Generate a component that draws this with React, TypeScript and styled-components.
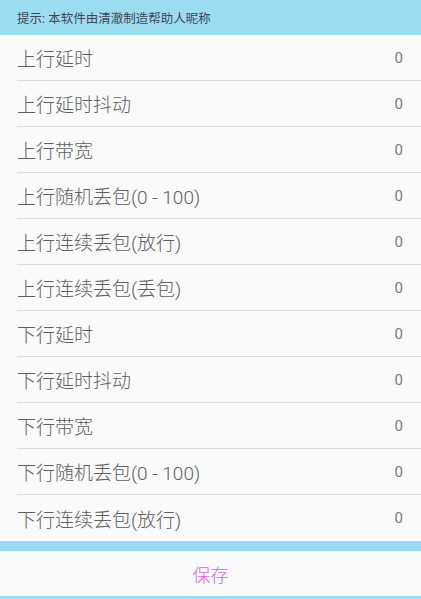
import React from "react";
import styled, { createGlobalStyle } from "styled-components";

const Global = createGlobalStyle`
  html, body { margin: 0; padding: 0; background: #fafafa; }
  body { font-family: Roboto, "Noto Sans CJK SC", sans-serif; }
`;

const Page = styled.div`
  display: flex;
  flex-direction: column;
  width: 421px;
  height: 599px;
  background: #fafafa;
  overflow: hidden;
`;

const Hint = styled.div`
  height: 35px;
  background: #9bdcf2;
  color: #3d4a50;
  font-size: 12.5px;
  display: flex;
  align-items: center;
  padding-left: 17px;
  padding-bottom: 1px;
  box-sizing: border-box;
`;

const List = styled.div`
  display: flex;
  flex-direction: column;
`;

const Row = styled.div<{ $last?: boolean }>`
  height: 46px;
  box-sizing: border-box;
  margin-left: 17px;
  padding-right: 18px;
  display: flex;
  align-items: center;
  justify-content: space-between;
  border-bottom: ${(p) => (p.$last ? "none" : "1px solid #dddddd")};
`;

const Label = styled.span`
  font-size: 19px;
  font-weight: 300;
  color: #5f5f5f;
`;

const Value = styled.span`
  font-size: 15px;
  font-weight: 400;
  color: #7a7a7a;
`;

const Band = styled.div`
  height: 10px;
  background: #9bdcf2;
`;

const SaveButton = styled.div`
  height: 45px;
  display: flex;
  align-items: center;
  justify-content: center;
  font-size: 18px;
  font-weight: 300;
  color: #e060e0;
  background: #fafafa;
  border-top: 1px solid #e3f4fa;
  box-sizing: border-box;
`;

const BottomBar = styled.div`
  height: 3px;
  background: #9bdcf2;
`;

const items = [
  "上行延时",
  "上行延时抖动",
  "上行带宽",
  "上行随机丢包(0 - 100)",
  "上行连续丢包(放行)",
  "上行连续丢包(丢包)",
  "下行延时",
  "下行延时抖动",
  "下行带宽",
  "下行随机丢包(0 - 100)",
  "下行连续丢包(放行)",
];

export default function App() {
  return (
    <Page>
      <Global />
      <Hint>提示: 本软件由清澈制造帮助人昵称</Hint>
      <List>
        {items.map((t, i) => (
          <Row key={t} $last={i === items.length - 1}>
            <Label>{t}</Label>
            <Value>0</Value>
          </Row>
        ))}
      </List>
      <Band />
      <SaveButton>保存</SaveButton>
      <BottomBar />
    </Page>
  );
}
